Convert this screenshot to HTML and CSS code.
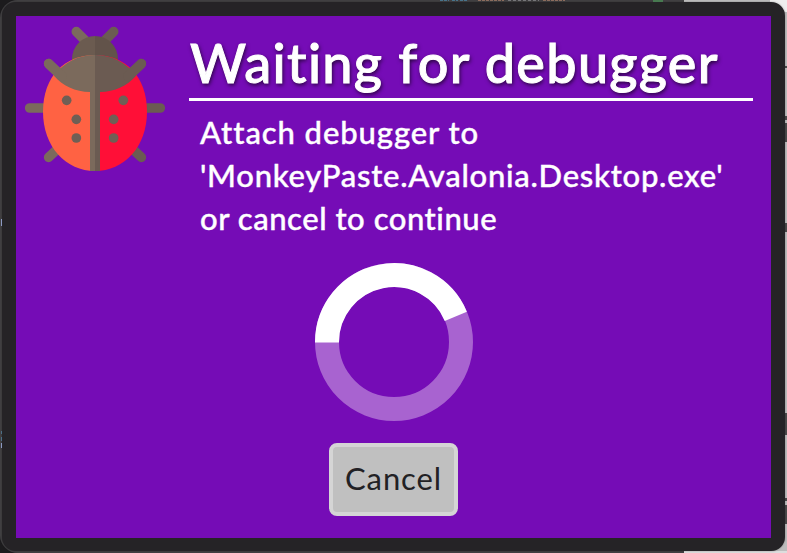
FILE: index.html
```html
<!DOCTYPE html>
<html lang="en">
<head>
<meta charset="utf-8">
<title>Waiting for debugger</title>
<link rel="stylesheet" href="styles.css">
</head>
<body>
<svg class="backdrop" width="787" height="553" aria-hidden="true">
  <rect width="787" height="553" fill="#1c1b1d"/>
  <rect x="684" width="103" height="553" fill="#bdbdbd"/>
  <rect x="770" width="17" height="12" fill="#eeeeee"/>
  <path d="M785 66h2v2h-2zM785 116h2v4h-2zM785 123h2v19h-2zM785 223h2v9h-2zM785 413h2v22h-2zM785 498h2v3h-2zM785 505h2v19h-2z" fill="#4b4b4b"/>
  <path d="M684 551h103v2H684z" fill="#dddddd"/>
</svg>
<main class="dialog">
  <div class="panel">
    <svg class="bug" viewBox="72 78 426 438" aria-hidden="true">
      <g stroke-width="29" stroke-linecap="round">
        <path d="M229 95l40 40M146 191l50 48M89 324h60M146 472l45-42" stroke="#7b6a5c"/>
        <path d="M341 95l-40 40M424 191l-50 48M481 324h-60M424 472l-45-42" stroke="#6b5b52"/>
      </g>
      <path d="M285 108a69 69 0 0 0-69 69v40h69z" fill="#6b5b50"/>
      <path d="M285 108a69 69 0 0 1 69 69v40h-69z" fill="#62534a"/>
      <path d="M285 165C195 165 129 228 129 335C129 440 198 513 285 513z" fill="#ff6243"/>
      <path d="M285 165C375 165 441 228 441 335C441 440 372 513 285 513z" fill="#ff0f37"/>
      <path d="M285 165C235 165 190 188 162 227C187 257 226 275 270 276V513H285z" fill="#7b6a5c"/>
      <path d="M285 165C335 165 380 188 408 227C383 257 344 275 300 276V513H285z" fill="#6b5b52"/>
      <path d="M146 191l40 38" stroke="#7b6a5c" stroke-width="29" stroke-linecap="round"/>
      <path d="M424 191l-40 38" stroke="#6b5b52" stroke-width="29" stroke-linecap="round"/>
      <g fill="#6f5f55"><circle cx="200" cy="301" r="14.5"/><circle cx="229" cy="358" r="14.5"/><circle cx="229" cy="414" r="14.5"/><circle cx="370" cy="301" r="14.5"/><circle cx="341" cy="358" r="14.5"/><circle cx="341" cy="414" r="14.5"/></g>
    </svg>
    <div class="content">
      <h1 class="title">Waiting for debugger</h1>
      <p class="message"><span class="line-one">Attach debugger to</span><br><span class="line-two">'MonkeyPaste.Avalonia.Desktop.exe'</span><br><span class="line-three">or cancel to continue</span></p>
    </div>
    <div class="progress">
      <svg class="spinner" viewBox="0 0 158 158" aria-hidden="true">
        <circle cx="79" cy="79" r="67" fill="none" stroke="#a863d0" stroke-width="24"/>
        <path d="M12 79.5A67 67 0 0 1 140.8 53.3" fill="none" stroke="#fff" stroke-width="24"/>
      </svg>
      <button class="cancel"><span>Cancel</span></button>
    </div>
  </div>
</main>
<svg class="edge-marks" width="787" height="553" aria-hidden="true">
  <path d="M440 .5h9m3 0h6m2 0h8" stroke="#48738b" stroke-dasharray="3 1"/>
  <path d="M478 .5h26m39 0h22" stroke="#8c6d5e" stroke-dasharray="3 1"/>
  <path d="M508 .5h31" stroke="#77777a" stroke-dasharray="3 2"/>
  <path d="M653 0h10v2h-10z" fill="#477950"/>
  <path d="M1 219h1v7h-1zM1 443h1v5h-1z" fill="#8d9bc4"/>
  <path d="M1 431h1v3h-1zM1 437h1v4h-1z" fill="#4d6f86"/>
</svg>
</body>
</html>
```

FILE: styles.css
```css
* { box-sizing: border-box; }
body {
  margin: 0;
  width: 787px;
  height: 553px;
  overflow: hidden;
  font-family: Lato, "Open Sans", sans-serif;
}
.backdrop { position: absolute; inset: 0; z-index: -1; }
.edge-marks { position: absolute; inset: 0; pointer-events: none; }
.dialog {
  width: 787px;
  height: 553px;
  padding: 2px;
  border-radius: 18px;
  background: linear-gradient(90deg, #424143 0 684px, transparent 684px);
}
.panel {
  width: 783px;
  height: 549px;
  border: 14px solid #252326;
  border-bottom-width: 13px;
  border-radius: 14px;
  background: #750cb6;
  background-clip: padding-box;
  box-shadow: 0 0 2px rgba(0, 0, 0, .35);
  display: grid;
  grid-template-columns: 173px 564px;
  grid-template-rows: 247px 1fr;
}
.bug { width: 142px; height: 146px; margin: 10px 0 0 8px; }
.title {
  margin: 0;
  height: 85px;
  border-bottom: 3px solid #fff;
  padding: 15px 0 0 1px;
  font-size: 54px;
  line-height: 64px;
  font-weight: 500;
  color: #fff;
  white-space: nowrap;
  -webkit-text-stroke: 1px #fff;
  letter-spacing: 1.3px;
  text-shadow: 1px 2px 4px rgba(0, 0, 0, .75);
}
.message {
  margin: 10px 0 0 11px;
  font-size: 31px;
  line-height: 43px;
  font-weight: 500;
  color: #fff;
  white-space: nowrap;
  -webkit-text-stroke: .4px #fff;
}
.line-one { letter-spacing: .92px; }
.line-two { letter-spacing: .73px; }
.line-three { letter-spacing: .54px; }
.progress {
  grid-column: 1 / -1;
  width: 755px;
  display: flex;
  flex-direction: column;
  align-items: center;
}
.spinner { width: 158px; height: 158px; margin-left: 1px; flex: none; }
.cancel {
  width: 129px;
  height: 73px;
  margin-top: 22px;
  padding: 0 0 3px;
  border: 4px solid #d5d5d5;
  border-radius: 8px;
  background: #c0c0c0;
  color: #222124;
  font: 400 31px/60px Lato, "Open Sans", sans-serif;
  letter-spacing: .9px;
}
```
